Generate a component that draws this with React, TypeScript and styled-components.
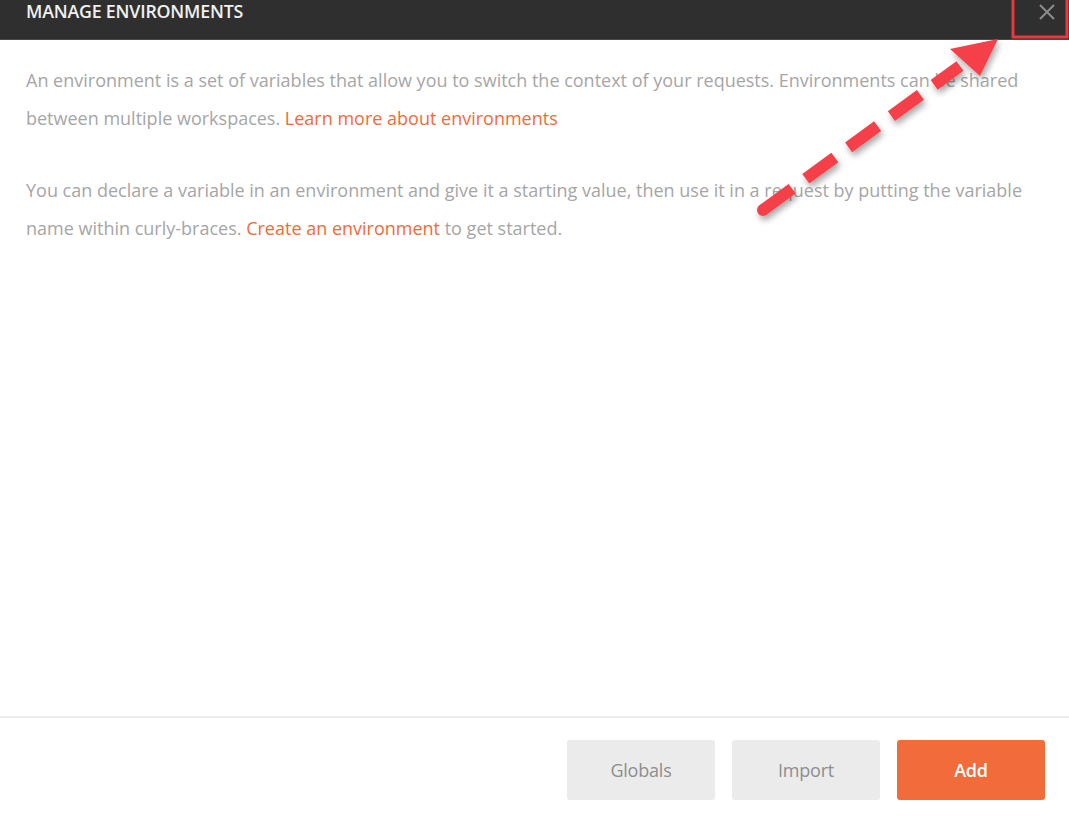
import React from "react";
import styled, { createGlobalStyle } from "styled-components";

const GlobalStyle = createGlobalStyle`
  html, body { margin: 0; padding: 0; background: #ffffff; }
  body { font-family: "Open Sans", "Noto Sans", sans-serif; }
  * { box-sizing: border-box; }
`;

const Page = styled.div`
  position: relative;
  width: 1069px;
  height: 821px;
  display: flex;
  flex-direction: column;
  overflow: hidden;
  background: #fff;
`;

const Header = styled.header`
  height: 40px;
  flex: none;
  background: #2f2f2f;
  display: flex;
  align-items: flex-start;
  justify-content: space-between;
  padding: 1px 0 0 26px;
  border-bottom: 1px solid #4a4a4a;
`;

const Title = styled.h1`
  margin: 0;
  font-size: 17.8px;
  line-height: 20px;
  font-weight: 600;
  color: #f0f0f0;
  letter-spacing: -0.2px;
  text-transform: uppercase;
`;

const CloseButton = styled.button`
  width: 56px;
  height: 22px;
  border: 0;
  background: transparent;
  color: #8c8c8c;
  display: flex;
  align-items: center;
  justify-content: center;
  padding: 0 0 0 12px;
  cursor: pointer;
`;

const Body = styled.main`
  flex: 1;
  padding: 21px 26px 0 26px;
`;

const Paragraph = styled.p`
  margin: 0 0 34px 0;
  font-size: 18px;
  line-height: 38px;
  color: #a6a6a6;
  letter-spacing: 0;
`;

const Link = styled.a`
  color: #f26b3a;
  text-decoration: none;
  cursor: pointer;
`;

const Footer = styled.footer`
  flex: none;
  border-top: 2px solid #ececec;
  display: flex;
  justify-content: flex-end;
  gap: 17px;
  padding: 22px 24px 21px 0;
`;

const Button = styled.button<{ $primary?: boolean }>`
  width: 148px;
  height: 60px;
  border: 0;
  border-radius: 3px;
  font-family: "Open Sans", "Noto Sans", sans-serif;
  font-size: 18px;
  letter-spacing: -0.2px;
  background: ${(p) => (p.$primary ? "#f26b3a" : "#ebebeb")};
  color: ${(p) => (p.$primary ? "#ffffff" : "#8e8e8e")};
  font-weight: ${(p) => (p.$primary ? 600 : 400)};
  cursor: pointer;
`;

const Annotation = styled.svg`
  position: absolute;
  left: 0;
  top: 0;
  width: 1069px;
  height: 821px;
  pointer-events: none;
`;

export default function App() {
  return (
    <>
      <GlobalStyle />
      <Page>
        <Header>
          <Title>Manage Environments</Title>
          <CloseButton aria-label="Close">
            <svg width="16" height="16" viewBox="0 0 16 16">
              <path d="M1 1 L15 15 M15 1 L1 15" stroke="#8c8c8c" strokeWidth="2" fill="none" />
            </svg>
          </CloseButton>
        </Header>
        <Body>
          <Paragraph>
            An environment is a set of variables that allow you to switch the context of your requests. Environments can be shared
            between multiple workspaces. <Link>Learn more about environments</Link>
          </Paragraph>
          <Paragraph>
            You can declare a variable in an environment and give it a starting value, then use it in a request by putting the variable
            name within curly-braces. <Link>Create an environment</Link> to get started.
          </Paragraph>
        </Body>
        <Footer>
          <Button>Globals</Button>
          <Button>Import</Button>
          <Button $primary>Add</Button>
        </Footer>
        <Annotation viewBox="0 0 1069 821">
          <defs>
            <filter id="sh" x="-20%" y="-20%" width="140%" height="140%">
              <feDropShadow dx="2" dy="4" stdDeviation="3" floodColor="#000" floodOpacity="0.35" />
            </filter>
          </defs>
          <rect x="1013" y="-3" width="54" height="40" fill="none" stroke="#e8393d" strokeWidth="3" />
          <g filter="url(#sh)">
            <line
              x1="763"
              y1="210"
              x2="960"
              y2="66"
              stroke="#f5404a"
              strokeWidth="12"
              strokeDasharray="36 17"
              strokeLinecap="butt"
            />
            <circle cx="763" cy="210" r="6" fill="#f5404a" />
            <polygon points="998,39 950,49 980,76" fill="#f5404a" />
          </g>
        </Annotation>
      </Page>
    </>
  );
}
